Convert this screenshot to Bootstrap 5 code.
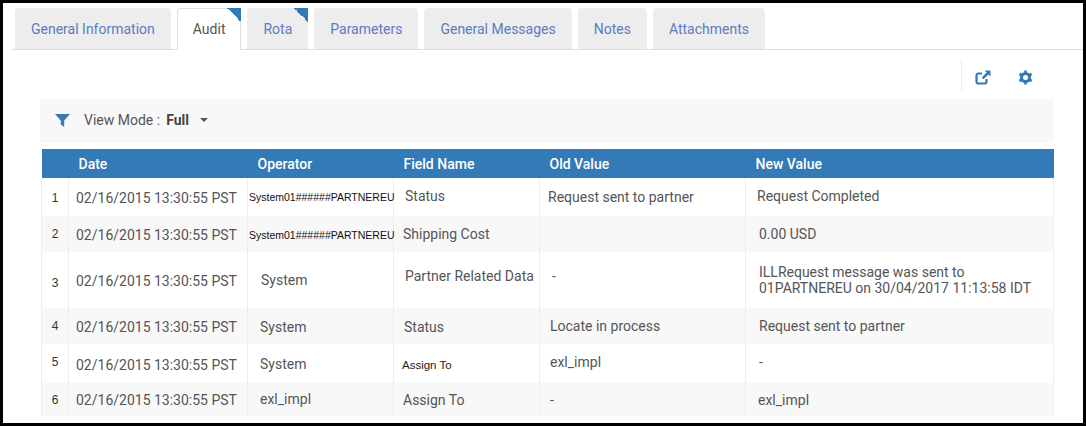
<!DOCTYPE html>
<html lang="en">
<head>
  <meta charset="UTF-8">
  <title>Audit</title>
  <link href="https://cdn.jsdelivr.net/npm/bootstrap@5.3.0/dist/css/bootstrap.min.css" rel="stylesheet" />
  <style>
    html, body { height: 426px; overflow: hidden; }
    body { background: #000; padding: 3px; font-family: Roboto, sans-serif; font-size: 14px; color: #555; }
    .page { background: #fff; height: 420px; overflow: hidden; }

    .tabs { padding: 5px 0 0 3px; gap: 6px; height: 47px; border-bottom: 1px solid #dedede; margin-left: 9px; --bs-nav-tabs-border-width: 0; }
    .tabs .nav-link { height: 41px; padding: 11px 16px 0; line-height: 20px; background: #ededed; color: #6079c4; border: 0; border-radius: 4px 4px 0 0; margin: 0; font-size: 14px; }
    .tabs .nav-link.active { height: 42px; background: #fff; color: #555; border: 1px solid #dedede; border-bottom: 0; padding: 10px 15px 0; position: relative; }
    .tabs .nav-item { position: relative; }
    .flag { position: absolute; top: 0; right: 0; width: 14px; height: 14px; background: linear-gradient(to top right, transparent 50%, #337ab7 50%); }

    .tools { height: 50px; padding: 9px 50px 0 0; }
    .tools .sep { border-left: 1px solid #eee; height: 33px; width: 14px; }
    .tools svg { display: block; }
    .tools .g { margin-left: 27px; }
    .tools .e, .tools .g { padding-top: 11px; }

    .filter { margin: -1px 29px 0 37px; height: 44px; background: #f8f8f8; padding: 0 0 2px 15px; color: #555; }
    .filter .lbl { margin-left: 14px; }
    .filter b { margin-left: 6px; font-weight: 700; color: #444; }
    .caret-d { margin-left: 11px; width: 0; height: 0; border: 4px solid transparent; border-top: 4px solid #555; border-bottom: 0; }

    .audit-wrap { margin: 6px 30px 0 38px; }
    .audit { table-layout: fixed; width: 1012px; border-collapse: collapse; margin: 0; font-size: 14px; }
    .audit > :not(caption) > * > * { padding: 0; border: 0; vertical-align: middle; box-shadow: none; line-height: 16px; color: #555; }
    .audit th { background: #337ab7; font-weight: 500; height: 29px; }
    .audit > thead > tr > th { color: #fff; padding-left: 10px; }
    .audit td { border-left: 1px solid #eee; background: #fff; }
    .audit > tbody > tr > td { border-left: 1px solid #eee; }
    .audit > tbody > tr > td:last-child { border-right: 1px solid #eee; }
    .audit tbody tr:nth-child(even) td { background: #f8f8f8; }
    .audit > tbody > tr > .n { text-align: center; font-family: "Liberation Sans", sans-serif; font-size: 12px; color: #333; }
    .audit > tbody > tr > .sm { font-family: "Liberation Sans", sans-serif; font-size: 10.5px; color: #111; white-space: nowrap; }
    .audit > tbody > tr > .as { font-family: "Liberation Sans", sans-serif; font-size: 11.5px; color: #222; }
    .r1 { height: 38px; } .r2 { height: 36px; } .r3 { height: 56px; } .r4 { height: 36px; } .r5 { height: 39px; } .r6 { height: 33px; }

    .audit .x1 { padding-left: 1px; } .audit .x7 { padding-left: 7px; } .audit .x8 { padding-left: 8px; }
    .audit .x9 { padding-left: 9px; } .audit .x10 { padding-left: 10px; } .audit .x11 { padding-left: 11px; }
    .audit .x12 { padding-left: 12px; } .audit .x13 { padding-left: 13px; }
    .audit .t2 { padding-top: 2px; } .audit .t6 { padding-top: 6px; }
    .audit .b2 { padding-bottom: 2px; } .audit .b4 { padding-bottom: 4px; } .audit .b8 { padding-bottom: 8px; }
  </style>
</head>
<body>
  <div class="page">
    <ul class="nav nav-tabs tabs">
      <li class="nav-item"><a class="nav-link" href="#">General Information</a></li>
      <li class="nav-item"><a class="nav-link active" href="#">Audit</a><span class="flag"></span></li>
      <li class="nav-item"><a class="nav-link" href="#">Rota</a><span class="flag"></span></li>
      <li class="nav-item"><a class="nav-link" href="#">Parameters</a></li>
      <li class="nav-item"><a class="nav-link" href="#">General Messages</a></li>
      <li class="nav-item"><a class="nav-link" href="#">Notes</a></li>
      <li class="nav-item"><a class="nav-link" href="#">Attachments</a></li>
    </ul>

    <div class="d-flex justify-content-end tools">
      <div class="sep"></div>
      <div class="e">
        <svg width="16" height="15" viewBox="0 0 16 15">
          <path d="M7 3.5H3.5A2 2 0 0 0 1.5 5.5v6a2 2 0 0 0 2 2h6a2 2 0 0 0 2-2V9" fill="none" stroke="#337ab7" stroke-width="2.2"/>
          <path d="M9.5 0.5H15.5V6.5L13.4 4.4 8.6 9.2 6.8 7.4 11.6 2.6Z" fill="#337ab7"/>
        </svg>
      </div>
      <div class="g">
        <svg width="15" height="15" viewBox="0 0 15 15">
          <circle cx="7.5" cy="7.5" r="4" fill="none" stroke="#337ab7" stroke-width="3"/>
          <path d="M7.5 0.5v3M7.5 11.5v3M1.4 4l2.6 1.5M11 9.5l2.6 1.5M1.4 11l2.6-1.5M11 5.5L13.6 4" stroke="#337ab7" stroke-width="2.6"/>
        </svg>
      </div>
    </div>

    <div class="d-flex align-items-center filter">
      <svg width="15" height="13" viewBox="0 0 15 13"><path d="M0 0H15L9.2 6.4V13L5.8 10.6V6.4Z" fill="#337ab7"/></svg>
      <span class="lbl">View Mode :</span>
      <b>Full</b>
      <span class="caret-d"></span>
    </div>

    <div class="audit-wrap">
      <table class="table audit">
        <colgroup>
          <col width="27"><col width="179"><col width="146"><col width="146"><col width="206"><col width="308">
        </colgroup>
        <thead>
          <tr>
            <th></th>
            <th>Date</th>
            <th>Operator</th>
            <th>Field Name</th>
            <th>Old Value</th>
            <th>New Value</th>
          </tr>
        </thead>
        <tbody>
          <tr class="r1">
            <td class="n t2">1</td>
            <td class="x7 t2">02/16/2015 13:30:55 PST</td>
            <td class="x1 sm">System01######PARTNEREU</td>
            <td class="x11 b2">Status</td>
            <td class="x8">Request sent to partner</td>
            <td class="x11 b2">Request Completed</td>
          </tr>
          <tr class="r2">
            <td class="n">2</td>
            <td class="x7 t2">02/16/2015 13:30:55 PST</td>
            <td class="x1 sm t2">System01######PARTNEREU</td>
            <td class="x9">Shipping Cost</td>
            <td></td>
            <td class="x13">0.00 USD</td>
          </tr>
          <tr class="r3">
            <td class="n t6">3</td>
            <td class="x7 t2">02/16/2015 13:30:55 PST</td>
            <td class="x13">System</td>
            <td class="x11 b8">Partner Related Data</td>
            <td class="x12 b8">-</td>
            <td class="x13">ILLRequest message was sent to<br>01PARTNEREU on 30/04/2017 11:13:58 IDT</td>
          </tr>
          <tr class="r4">
            <td class="n">4</td>
            <td class="x7 t2">02/16/2015 13:30:55 PST</td>
            <td class="x12 t2">System</td>
            <td class="x10 t2">Status</td>
            <td class="x10">Locate in process</td>
            <td class="x13">Request sent to partner</td>
          </tr>
          <tr class="r5">
            <td class="n b4">5</td>
            <td class="x7 t2">02/16/2015 13:30:55 PST</td>
            <td class="x12">System</td>
            <td class="x8 as t2">Assign To</td>
            <td class="x10 b4">exl_impl</td>
            <td class="x13 b4">-</td>
          </tr>
          <tr class="r6">
            <td class="n">6</td>
            <td class="x7">02/16/2015 13:30:55 PST</td>
            <td class="x12 b2">exl_impl</td>
            <td class="x9">Assign To</td>
            <td class="x10">-</td>
            <td class="x12">exl_impl</td>
          </tr>
        </tbody>
      </table>
    </div>
  </div>
  <script src="https://cdn.jsdelivr.net/npm/bootstrap@5.3.0/dist/js/bootstrap.bundle.min.js"></script>
</body>
</html>
